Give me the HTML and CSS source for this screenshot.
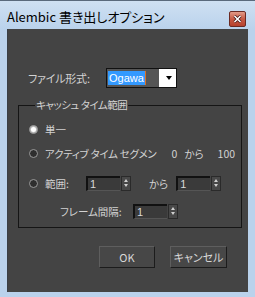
FILE: index.html
```html
<!DOCTYPE html>
<html lang="ja">
  <head>
    <meta charset="UTF-8" />
    <title>Alembic 書き出しオプション</title>
    <link rel="stylesheet" href="styles.css">
  </head>
  <body>
    <div class="window">
      <div class="titlebar">
        <span class="title">Alembic 書き出しオプション</span>
        <button type="button" class="close-btn">
          <svg width="9" height="8" viewBox="0 0 9 8">
            <path d="M1.5 1 L7.5 7 M7.5 1 L1.5 7" stroke="#3a1010" stroke-width="3" />
            <path d="M1.5 1 L7.5 7 M7.5 1 L1.5 7" stroke="#ffffff" stroke-width="1.6" />
          </svg>
        </button>
      </div>

      <div class="client">
        <div class="format-row">
          <span class="format-label">ファイル形式:</span>
          <div class="combo">
            <div class="combo-value"><span class="combo-sel">Ogawa</span><span class="caret"></span></div>
            <div class="combo-arrow"></div>
          </div>
        </div>

        <fieldset class="group">
          <legend class="group-title">キャッシュ タイム範囲</legend>

          <div class="row row-single">
            <span class="radio radio-on"></span>
            <span class="row-text">単一</span>
          </div>

          <div class="row row-active">
            <span class="radio"></span>
            <span class="row-text active-label">アクティブ タイム セグメン</span>
            <span class="num-start">0</span>
            <span class="kara">から</span>
            <span class="num-end">100</span>
          </div>

          <div class="row row-range">
            <span class="radio"></span>
            <span class="row-text range-label">範囲:</span>
            <div class="spinner">
              <div class="spin-field">1</div>
              <div class="spin-arrows"><span class="up"></span><span class="down"></span></div>
            </div>
            <span class="kara kara-range">から</span>
            <div class="spinner">
              <div class="spin-field">1</div>
              <div class="spin-arrows"><span class="up"></span><span class="down"></span></div>
            </div>
          </div>

          <div class="row row-step">
            <span class="row-text step-label">フレーム間隔:</span>
            <div class="spinner">
              <div class="spin-field">1</div>
              <div class="spin-arrows"><span class="up"></span><span class="down"></span></div>
            </div>
          </div>
        </fieldset>

        <div class="buttons">
          <button type="button" class="btn btn-ok">OK</button>
          <button type="button" class="btn btn-cancel">キャンセル</button>
        </div>
      </div>
    </div>
  </body>
</html>
```

FILE: styles.css
```css
html,
body {
  margin: 0;
  padding: 0;
}
body {
  font-family: "Noto Sans CJK JP", "Noto Sans", sans-serif;
  font-feature-settings: "palt";
}
.window {
  width: 255px;
  height: 297px;
  box-sizing: border-box;
  background: #bad2ec;
  border-top: 1px solid #5a6a7c;
}
.titlebar {
  height: 28px;
  display: flex;
  align-items: center;
  padding: 0 9px 0 7px;
  background: linear-gradient(#cfe0f2, #bad2ec);
}
.title {
  flex: 1;
  font-size: 13px;
  color: #000000;
  padding-top: 2px;
  white-space: nowrap;
}
.close-btn {
  width: 17px;
  height: 16px;
  margin-top: 7px;
  padding: 0;
  border: 1px solid #6b2a23;
  border-radius: 2px;
  background: linear-gradient(#e29a87, #c75a45 50%, #b6412d);
  display: flex;
  align-items: center;
  justify-content: center;
  flex-shrink: 0;
}
.client {
  margin: 0 7px;
  height: 263px;
  box-sizing: border-box;
  background: #444444;
  border-left: 1px solid #3a3f46;
  padding-top: 39px;
  color: #d2d2d2;
  font-size: 11px;
}
.format-row {
  display: flex;
  align-items: center;
  height: 20px;
  padding-left: 20px;
}
.format-label {
  width: 78px;
  letter-spacing: -0.2px;
}
.combo {
  width: 71px;
  height: 20px;
  box-sizing: border-box;
  border: 1px solid #111111;
  display: flex;
  background: #ffffff;
}
.combo-value {
  width: 51px;
  background: #555555;
  padding: 2px 0 2px 1px;
  display: flex;
  align-items: center;
}
.combo-sel {
  background: #3399ff;
  color: #ffffff;
  font-size: 11px;
  line-height: 14px;
  padding: 0 1px;
  font-family: "Liberation Sans", sans-serif;
}
.caret {
  width: 1px;
  height: 14px;
  background: #e07020;
}
.combo-arrow {
  flex: 1;
  position: relative;
}
.combo-arrow::after {
  content: "";
  position: absolute;
  right: 4px;
  top: 7px;
  border-left: 3px solid transparent;
  border-right: 3px solid transparent;
  border-top: 4px solid #000000;
}
.group {
  margin: 11px 0 0 10px;
  width: 224px;
  height: 129px;
  box-sizing: border-box;
  padding: 0 0 0 10px;
  border: 1px solid #151515;
  font-size: 10.5px;
}
.group-title {
  margin-left: 6px;
  padding: 0 1px;
  font-size: 10.5px;
  line-height: 12px;
  letter-spacing: -0.5px;
}
.row {
  display: flex;
  align-items: center;
  height: 20px;
  white-space: nowrap;
}
.row > * {
  flex-shrink: 0;
}
.row-single {
  margin-top: 8px;
}
.row-active {
  margin-top: 4px;
}
.row-range {
  margin-top: 10px;
}
.row-step {
  margin-top: 8px;
}
.radio {
  width: 7px;
  height: 7px;
  border-radius: 50%;
  background: #2e2e2e;
  border: 1px solid #9a9a9a;
  margin-right: 7px;
}
.radio-on {
  background: #ffffff;
  border-color: #888888;
  box-shadow: inset 0 0 0 1px #bbbbbb;
}
.active-label {
  letter-spacing: -0.3px;
}
.num-start {
  margin-left: 15px;
}
.kara {
  margin-left: 7px;
}
.num-end {
  margin-left: 14px;
}
.range-label {
  width: 41px;
}
.kara-range {
  margin: 0 8px 0 18px;
}
.step-label {
  margin-left: 31px;
  width: 73px;
}
.spinner {
  display: flex;
  height: 15px;
}
.spin-field {
  width: 34px;
  box-sizing: border-box;
  background: #3a3a3a;
  border-top: 2px solid #111111;
  border-left: 2px solid #111111;
  border-bottom: 1px solid #555555;
  padding-left: 2px;
  font-family: "Liberation Sans", sans-serif;
  font-size: 11px;
  line-height: 12px;
  color: #d8d8d8;
}
.spin-arrows {
  width: 10px;
  margin-left: 1px;
  box-sizing: border-box;
  border: 1px solid #2a2a2a;
  background: #484848;
  display: flex;
  flex-direction: column;
  align-items: center;
  justify-content: center;
  gap: 2px;
}
.up {
  border-left: 2px solid transparent;
  border-right: 2px solid transparent;
  border-bottom: 3px solid #d0d0d0;
}
.down {
  border-left: 2px solid transparent;
  border-right: 2px solid transparent;
  border-top: 3px solid #d0d0d0;
}
.buttons {
  display: flex;
  margin: 18px 0 0 91px;
  gap: 15px;
}
.btn {
  width: 56px;
  height: 22px;
  padding: 0;
  background: #474747;
  border: 1px solid #1c1c1c;
  border-top-color: #5e5e5e;
  border-left-color: #5e5e5e;
  color: #d8d8d8;
  font-family: "Noto Sans CJK JP", sans-serif;
  font-feature-settings: "palt";
  font-size: 11px;
}
.btn-cancel {
  width: 57px;
}
```
